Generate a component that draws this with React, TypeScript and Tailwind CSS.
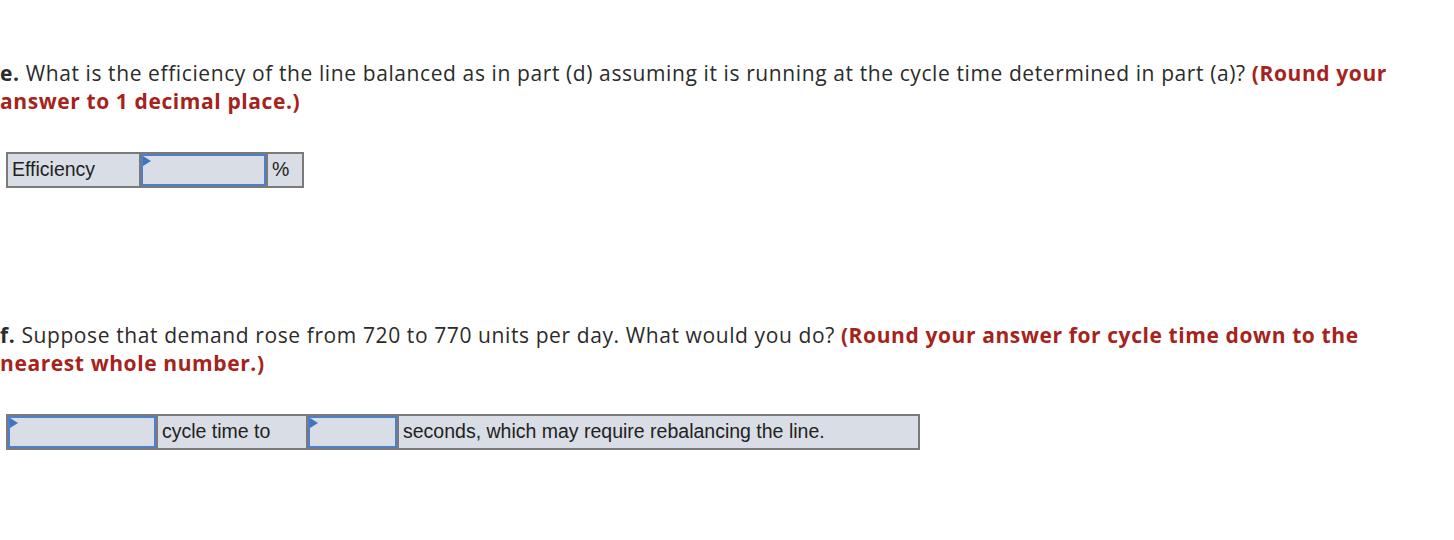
import React from 'react'

function Flag() {
  return (
    <svg className="absolute left-0 top-0" width="8" height="10" viewBox="0 0 8 10">
      <path d="M0 0 L8 5 L0 10 Z" fill="#3f74c4" />
    </svg>
  )
}

function InputCell({ width }: { width: string }) {
  return (
    <div className={`relative h-full border-2 border-[#4f7fc6] bg-[#d9dde5] ${width}`}>
      <Flag />
    </div>
  )
}

function TextCell({ children, width }: { children: React.ReactNode; width: string }) {
  return (
    <div className={`flex h-full items-center bg-[#d9dde5] px-[4px] ${width}`}>
      {children}
    </div>
  )
}

const cellFont = { fontFamily: '"Liberation Sans", Arial, sans-serif' }

export default function App() {
  return (
    <div
      className="min-h-[540px] bg-white pt-[59px] text-[#2b2b2b]"
      style={{ fontFamily: '"Open Sans", "Lato", sans-serif' }}
    >
      <p className="max-w-[1420px] text-[21px] leading-[28px] tracking-[0.6px]">
        <b>e.</b> What is the efficiency of the line balanced as in part (d) assuming it is running at the cycle
        time determined in part (a)? <b className="text-[#a6231c]">(Round your answer to 1 decimal place.)</b>
      </p>

      <div
        className="ml-[6px] mt-[37px] flex h-[36px] w-fit gap-[2px] border-2 border-[#7a7a7a] bg-[#7a7a7a] text-[19.5px] text-[#222]"
        style={cellFont}
      >
        <TextCell width="w-[131px]">Efficiency</TextCell>
        <InputCell width="w-[125px]" />
        <TextCell width="w-[34px]">%</TextCell>
      </div>

      <p className="mt-[133px] max-w-[1420px] text-[21px] leading-[28px] tracking-[0.6px]">
        <b>f.</b> Suppose that demand rose from 720 to 770 units per day. What would you do?{' '}
        <b className="text-[#a6231c]">(Round your answer for cycle time down to the nearest whole number.)</b>
      </p>

      <div
        className="ml-[6px] mt-[37px] flex h-[36px] w-fit gap-[2px] border-2 border-[#7a7a7a] bg-[#7a7a7a] text-[19.5px] text-[#222]"
        style={cellFont}
      >
        <InputCell width="w-[148px]" />
        <TextCell width="w-[148px]">cycle time to</TextCell>
        <InputCell width="w-[89px]" />
        <TextCell width="w-[519px]">seconds, which may require rebalancing the line.</TextCell>
      </div>
    </div>
  )
}
